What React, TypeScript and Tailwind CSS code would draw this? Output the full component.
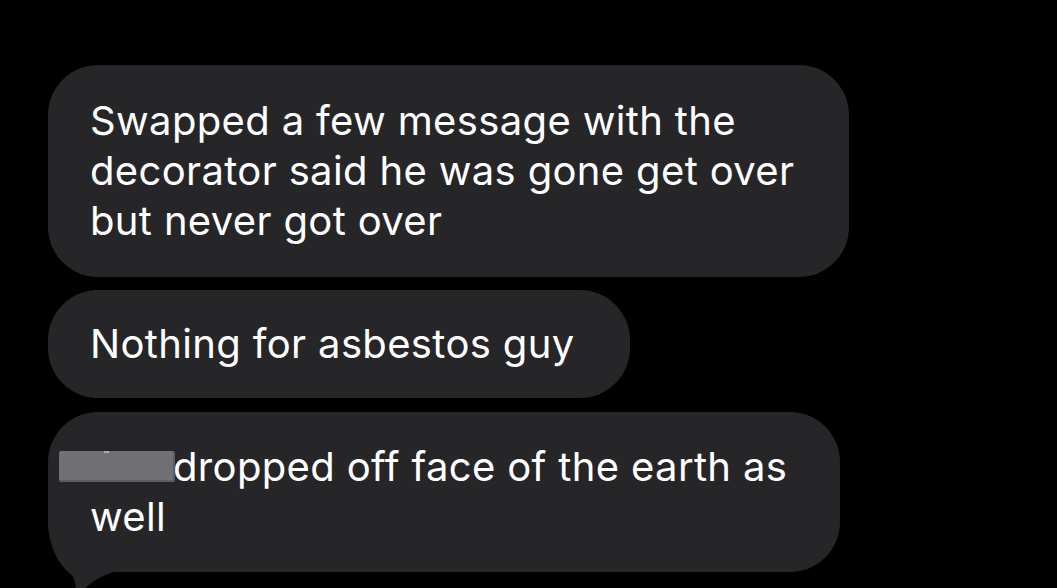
import React from 'react';

const bubble =
  'bg-[#262629] text-white rounded-[50px] pl-[42px] text-[40px] leading-[50px] tracking-[0.35px] whitespace-nowrap';

export default function App() {
  return (
    <div
      className="w-[1057px] h-[588px] bg-black overflow-hidden relative"
      style={{ fontFamily: 'Inter, "Noto Sans", sans-serif' }}
    >
      <div className="flex flex-col items-start gap-[13px] pt-[65px] pl-[48px]">
        {/* first message */}
        <div className={`${bubble} w-[801px] py-[31px]`}>
          Swapped a few message with the
          <br />
          decorator said he was gone get over
          <br />
          but never got over
        </div>

        {/* second message */}
        <div className={`${bubble} w-[582px] py-[29px]`}>Nothing for asbestos guy</div>

        {/* third message, with tail */}
        <div className="relative mt-[1px]">
          {/* tail */}
          <svg className="absolute left-0 top-[108px]" width="80" height="80" viewBox="0 0 80 80">
            <path
              d="M0 0 C 0 25, 10 45, 24 55 C 27 60, 28 66, 28 74 L 32 74 C 40 64, 50 57, 66 52 L 66 30 L 30 0 Z"
              fill="#262629"
            />
          </svg>
          <div className={`${bubble} relative w-[792px] py-[30px]`}>
            {/* redacted name */}
            <span className="absolute left-[11px] top-[39px] w-[116px] h-[31px] rounded-[2px] bg-[#717175] border-r-2 border-b-2 border-[#5d5d61]">
              <span className="absolute left-[45px] top-0 w-[5px] h-[2px] bg-[#a9a9ad]" />
            </span>
            <span className="inline-block w-[83px]" />
            dropped off face of the earth as
            <br />
            well
          </div>
        </div>
      </div>
    </div>
  );
}
